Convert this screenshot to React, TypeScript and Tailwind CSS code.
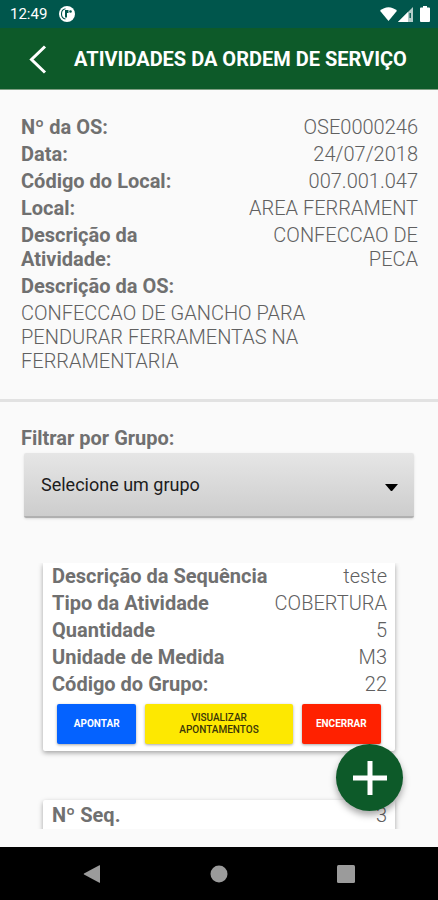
import type { ReactNode } from "react";

const orderFields = [
  { label: "Nº da OS:", value: "OSE0000246" },
  { label: "Data:", value: "24/07/2018" },
  { label: "Código do Local:", value: "007.001.047" },
  { label: "Local:", value: "AREA FERRAMENT" },
  { label: "Descrição da Atividade:", value: "CONFECCAO DE PECA" },
];

const activityFields = [
  { label: "Descrição da Sequência", value: "teste" },
  { label: "Tipo da Atividade", value: "COBERTURA" },
  { label: "Quantidade", value: "5" },
  { label: "Unidade de Medida", value: "M3" },
  { label: "Código do Grupo:", value: "22" },
];

export default function App() {
  return (
    <div className="flex h-screen flex-col bg-[#fafafa] font-['Roboto',sans-serif] text-[#707070]">
      <StatusBar />

      <header className="flex h-[62px] shrink-0 items-center border-b border-[#7f9f83] bg-[#0d5a29] pr-4 pl-6 text-white">
        <button type="button" aria-label="Voltar" className="flex w-[50px] shrink-0">
          <svg width="28" height="32" viewBox="0 0 28 32" fill="none" stroke="currentColor" strokeWidth="3">
            <path d="M21 3.500 7.500 16.500 21 29.500" />
          </svg>
        </button>
        <h1 className="text-xl font-bold whitespace-nowrap">ATIVIDADES DA ORDEM DE SERVIÇO</h1>
      </header>

      <main className="relative flex min-h-0 flex-1 flex-col pb-[18px]">
        <section className="shrink-0 border-b-[3px] border-[#e2e2e2] px-5 pt-[25px] pb-[26px]">
          {orderFields.map((field) => (
            <Field key={field.label} {...field} />
          ))}
          <p className="mb-[3px] pl-px text-xl leading-6 font-bold">Descrição da OS:</p>
          <p className="pr-6 pl-px text-xl leading-6 font-light text-[#606060]">
            CONFECCAO DE GANCHO PARA PENDURAR FERRAMENTAS NA FERRAMENTARIA
          </p>
        </section>

        <section className="shrink-0 px-5 pt-[22px]">
          <label htmlFor="grupo" className="mb-px block pl-px text-xl leading-7 font-bold">
            Filtrar por Grupo:
          </label>
          <div className="relative mx-1">
            <select
              id="grupo"
              className="block h-[65px] w-full appearance-none rounded-xs border-b-2 border-[#b0b0b0] bg-linear-to-b from-[#e6e6e6] to-[#cdcdcd] px-[17px] text-lg text-[#1c1c1c] shadow-sm"
            >
              <option>Selecione um grupo</option>
            </select>
            <svg className="pointer-events-none absolute top-[31px] right-4 text-black" width="13" height="8" viewBox="0 0 13 8">
              <path d="M0 0h13L7.500 6.500q-1 1-2 0z" fill="currentColor" />
            </svg>
          </div>
        </section>

        <section className="mt-[45px] min-h-0 flex-1 overflow-hidden px-[43px]">
          <article className="rounded-b-xs bg-white px-2 pt-px pb-[7px] shadow-[0_2px_5px_rgba(0,0,0,0.35)]">
            {activityFields.map((field) => (
              <Field key={field.label} {...field} />
            ))}
            <div className="mt-2 flex gap-[9px] px-[6px] text-[10px] leading-3 font-bold">
              <ActionButton className="flex-4 bg-[#0462ff] text-white">APONTAR</ActionButton>
              <ActionButton className="flex-5 bg-[#fde801] px-6 font-medium text-[#3b3608]">VISUALIZAR APONTAMENTOS</ActionButton>
              <ActionButton className="flex-4 bg-[#ff2100] text-white">ENCERRAR</ActionButton>
            </div>
          </article>

          <article className="mt-[49px] rounded-xs bg-white px-2 pt-[3px] pb-10 shadow-[0_2px_5px_rgba(0,0,0,0.35)]">
            <Field label="Nº Seq." value="3" />
          </article>
        </section>

        <button
          type="button"
          aria-label="Adicionar atividade"
          className="absolute right-[35px] bottom-9 flex size-[67px] items-center justify-center rounded-full bg-[#0d5a29] text-white shadow-[0_4px_7px_rgba(0,0,0,0.35)]"
        >
          <svg width="34" height="34" viewBox="0 0 34 34" fill="none" stroke="currentColor" strokeWidth="5">
            <path d="M17 0v34M0 17h34" />
          </svg>
        </button>
      </main>

      <NavigationBar />
    </div>
  );
}

function Field({ label, value }: { label: string; value: string }) {
  return (
    <div className="mb-[3px] flex justify-between gap-4 pl-px text-xl leading-6">
      <span className="font-bold">{label}</span>
      <span className="text-right font-light text-[#606060]">{value}</span>
    </div>
  );
}

function ActionButton({ className, children }: { className: string; children: ReactNode }) {
  return (
    <button type="button" className={`h-10 min-w-0 rounded-xs shadow-[0_1px_3px_rgba(0,0,0,0.35)] ${className}`}>
      {children}
    </button>
  );
}

function StatusBar() {
  return (
    <div className="flex h-7 shrink-0 items-center gap-3 bg-[#00564c] pr-2 pl-[10px] text-white">
      <span className="text-[15px]">12:49</span>
      <svg width="16" height="16" viewBox="0 0 16 16">
        <circle cx="8" cy="8" r="8" fill="#fff" />
        <path d="M6.500 2.800C3.500 3.300 2.500 5.500 2.500 8s1.200 4.500 4 5" fill="none" stroke="#00564c" strokeWidth="1.100" />
        <path d="M6 4h3.500v3H8v4.500H6z" fill="#00564c" />
        <circle cx="11.500" cy="5.500" r="1.300" fill="#00564c" />
      </svg>
      <div className="ml-auto flex items-center">
        <svg width="17" height="15" viewBox="0 0 17 15" fill="currentColor">
          <path d="M0 3.800C5-.900 12-.900 17 3.800L8.500 14z" />
        </svg>
        <svg className="ml-px" width="15" height="15" viewBox="0 0 15 15" fill="currentColor">
          <path d="M0 15 15 0v15z" opacity=".7" />
          <path d="M0 15 10 5v10z" />
          <path d="M11.500 6h1.400v5h-1.400z" fill="#00564c" />
        </svg>
        <svg className="ml-[7px]" width="10" height="16" viewBox="0 0 10 16" fill="currentColor">
          <path d="M3 0h4v1.500h2q1 0 1 1V15q0 1-1 1H1q-1 0-1-1V2.500q0-1 1-1h2z" />
        </svg>
      </div>
    </div>
  );
}

function NavigationBar() {
  return (
    <nav className="flex h-[53px] shrink-0 items-center justify-around bg-black px-7 text-[#9b9b9b]">
      <button type="button" aria-label="Voltar">
        <svg width="18" height="18" viewBox="0 0 18 18" fill="currentColor">
          <path d="M17 .500v17q0 .500-.600.300L1 9.500q-.600-.500 0-1L16.400.200q.600-.200.600.300z" />
        </svg>
      </button>
      <button type="button" aria-label="Início">
        <svg width="18" height="18" viewBox="0 0 18 18" fill="currentColor">
          <circle cx="9" cy="9" r="8.500" />
        </svg>
      </button>
      <button type="button" aria-label="Recentes">
        <svg width="18" height="18" viewBox="0 0 18 18" fill="currentColor">
          <rect width="18" height="18" rx="1.500" />
        </svg>
      </button>
    </nav>
  );
}
